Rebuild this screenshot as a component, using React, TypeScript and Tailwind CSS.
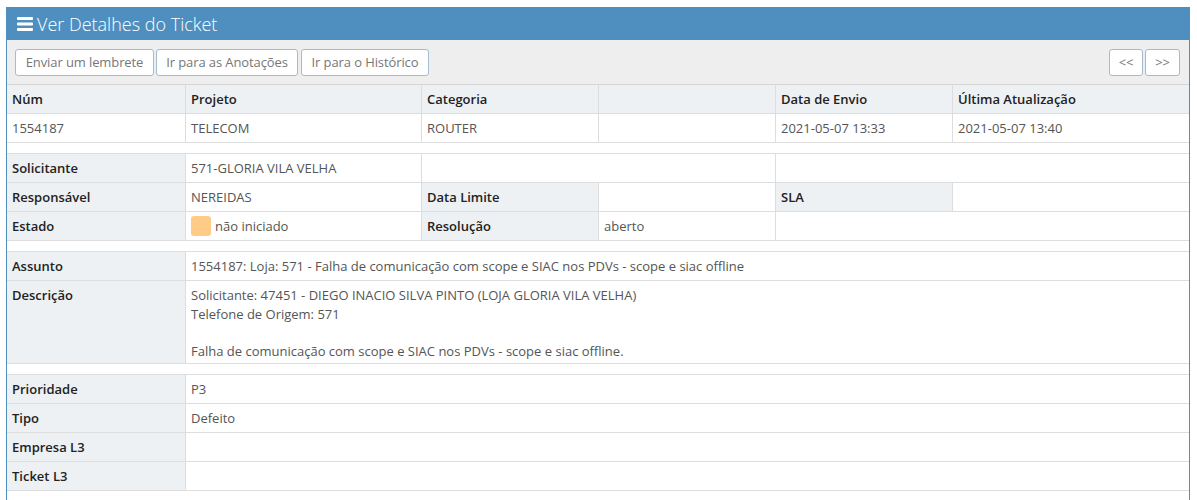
import React from "react";

const font = { fontFamily: '"Open Sans", "Liberation Sans", sans-serif' };

function L({ children, className = "" }: { children?: React.ReactNode; className?: string }) {
  return (
    <div className={`h-[29px] border-b border-r border-[#dddddd] bg-[#edf1f4] px-[5px] flex items-center font-semibold text-[#222] ${className}`}>
      {children}
    </div>
  );
}

function V({ children, className = "" }: { children?: React.ReactNode; className?: string }) {
  return (
    <div className={`h-[29px] border-b border-r border-[#dddddd] bg-white px-[5px] flex items-center text-[#555] ${className}`}>
      {children}
    </div>
  );
}

const grid = "grid grid-cols-[179px_236px_177px_177px_177px_1fr]";
const btn = "h-[27px] bg-white border border-[#a3bcd3] rounded-[3px] text-[#777] text-[13px] tracking-[-0.1px]";

export default function App() {
  return (
    <div className="pt-[7px] pl-[6px] bg-white min-h-[500px]" style={font}>
      <div className="w-[1184px] border border-[#4f8fbf] bg-white text-[13px] leading-[18px]">
        <div className="h-[33px] -mt-px -mx-px bg-[#4f8fbf] flex items-center pl-[11px] text-white">
          <svg width="16" height="14" viewBox="0 0 16 14" className="mr-[4px] mt-[1px]">
            <rect x="0" y="0" width="16" height="3" rx="0.8" fill="white" />
            <rect x="0" y="5.5" width="16" height="3" rx="0.8" fill="white" />
            <rect x="0" y="11" width="16" height="3" rx="0.8" fill="white" />
          </svg>
          <span className="text-[18px] font-light">Ver Detalhes do Ticket</span>
        </div>
        <div className="h-[45px] bg-[#eeeeee] border-b border-[#d6d6d6] flex items-center justify-between pl-[8px] pr-[9px]">
          <div className="flex items-center">
            <button className={`${btn} w-[139px]`}>Enviar um lembrete</button>
            <button className={`${btn} w-[142px] ml-[2px]`}>Ir para as Anotações</button>
            <button className={`${btn} w-[128px] ml-[3px]`}>Ir para o Histórico</button>
          </div>
          <div className="flex gap-[2px] items-center">
            <button className={`${btn} w-[34px] text-[11px]`}>&lt;&lt;</button>
            <button className={`${btn} w-[35px] text-[11px]`}>&gt;&gt;</button>
          </div>
        </div>

        <div className={grid}>
          <L>Núm</L>
          <L>Projeto</L>
          <L>Categoria</L>
          <L></L>
          <L>Data de Envio</L>
          <L className="border-r-0">Última Atualização</L>
          <V>1554187</V>
          <V className="text-[#333]">TELECOM</V>
          <V className="text-[#444]">ROUTER</V>
          <V></V>
          <V>2021-05-07 13:33</V>
          <V className="border-r-0">2021-05-07 13:40</V>
        </div>

        <div className={`${grid} mt-[10px] border-t border-[#dddddd]`}>
          <L>Solicitante</L>
          <V>571-GLORIA VILA VELHA</V>
          <V className="col-span-2"></V>
          <V className="col-span-2 border-r-0"></V>
          <L>Responsável</L>
          <V className="text-[#444]">NEREIDAS</V>
          <L>Data Limite</L>
          <V></V>
          <L>SLA</L>
          <V className="border-r-0"></V>
          <L>Estado</L>
          <V>
            <span className="inline-block w-[20px] h-[20px] rounded-[3px] bg-[#ffcc88] mr-[4px]"></span>
            não iniciado
          </V>
          <L>Resolução</L>
          <V>aberto</V>
          <V className="col-span-2 border-r-0"></V>
        </div>

        <div className={`${grid} mt-[10px] border-t border-[#dddddd]`}>
          <L>Assunto</L>
          <V className="col-span-5 border-r-0">1554187: Loja: 571 - Falha de comunicação com scope e SIAC nos PDVs - scope e siac offline</V>
          <div className="h-[83px] border-b border-r border-[#dddddd] bg-[#edf1f4] px-[5px] pt-[5px] font-semibold text-[#222] leading-[18.5px]">Descrição</div>
          <div className="col-span-5 h-[83px] border-b border-[#dddddd] px-[5px] pt-[5px] text-[#555] leading-[18.5px]">
            <div>Solicitante: 47451 - DIEGO INACIO SILVA PINTO (LOJA GLORIA VILA VELHA)</div>
            <div>Telefone de Origem: 571</div>
            <div>&nbsp;</div>
            <div>Falha de comunicação com scope e SIAC nos PDVs - scope e siac offline.</div>
          </div>
        </div>

        <div className={`${grid} mt-[10px] border-t border-[#dddddd]`}>
          <L>Prioridade</L>
          <V className="col-span-5 border-r-0">P3</V>
          <L>Tipo</L>
          <V className="col-span-5 border-r-0">Defeito</V>
          <L>Empresa L3</L>
          <V className="col-span-5 border-r-0"></V>
          <L>Ticket L3</L>
          <V className="col-span-5 border-r-0"></V>
        </div>
        <div className="h-[20px]"></div>
      </div>
    </div>
  );
}
